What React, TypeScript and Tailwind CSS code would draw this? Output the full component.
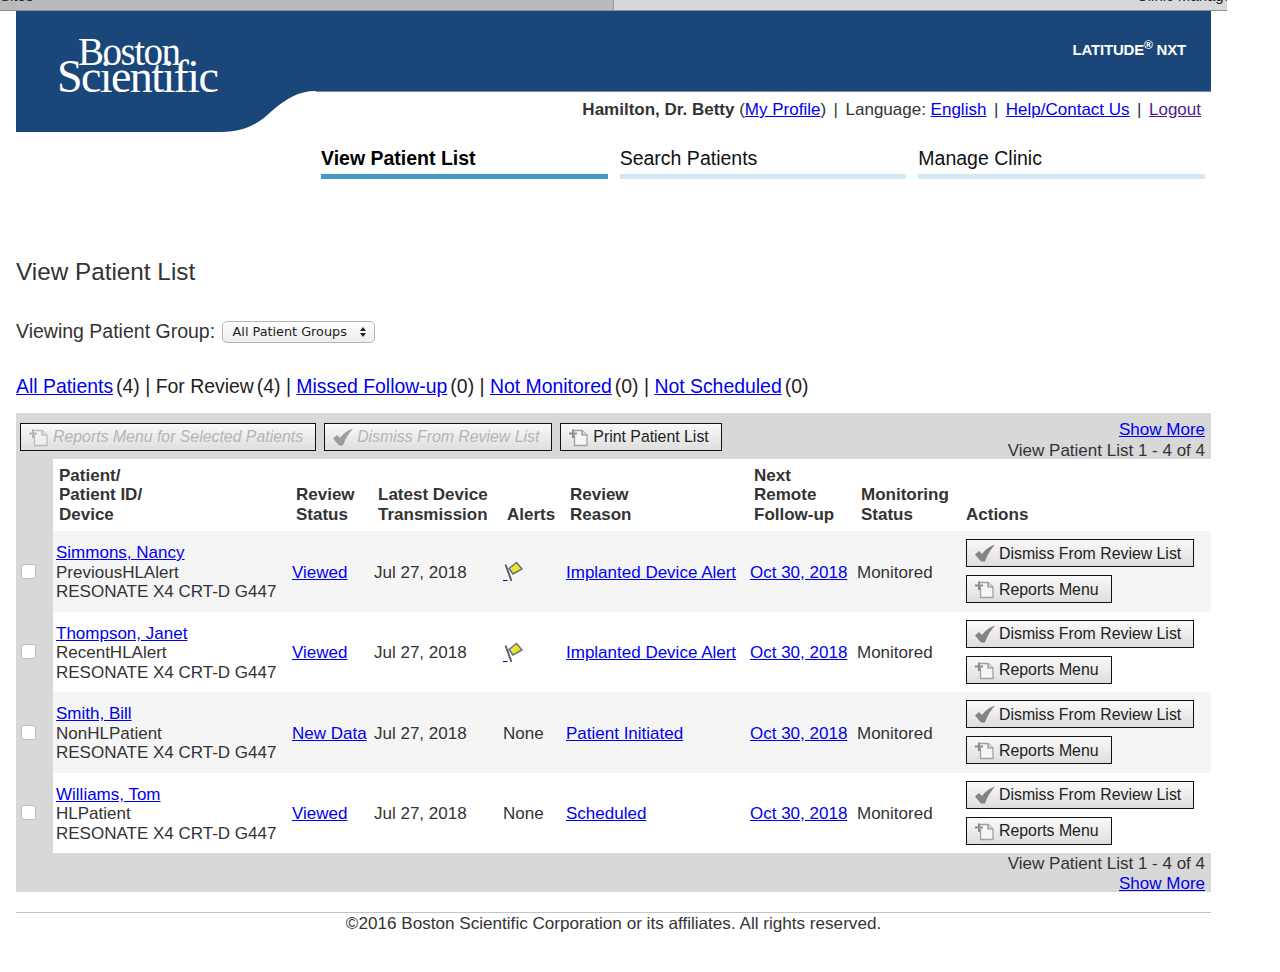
import type { ReactNode } from 'react'

type Patient = {
  name: string
  id: string
  review: string
  alert: boolean
  reason: string
}

const patients: Patient[] = [
  { name: 'Simmons, Nancy', id: 'PreviousHLAlert', review: 'Viewed', alert: true, reason: 'Implanted Device Alert' },
  { name: 'Thompson, Janet', id: 'RecentHLAlert', review: 'Viewed', alert: true, reason: 'Implanted Device Alert' },
  { name: 'Smith, Bill', id: 'NonHLPatient', review: 'New Data', alert: false, reason: 'Patient Initiated' },
  { name: 'Williams, Tom', id: 'HLPatient', review: 'Viewed', alert: false, reason: 'Scheduled' },
]

const A = ({ children }: { children: ReactNode }) => (
  <a href="#" className="text-[#0000ee] underline">{children}</a>
)

const Sep = () => <span className="mx-[7.5px]">|</span>

function DocIcon({ faded }: { faded?: boolean }) {
  return (
    <svg width="22" height="20" viewBox="0 0 22 20" className={faded ? 'opacity-60' : ''}>
      <path d="M4.5 3.5H14L19 8V18.5H6.5V8" fill="#f6f6f6" stroke="#a0a0a0" strokeWidth="1.3" />
      <path d="M1 6.5H9" stroke="#8d8d8d" strokeWidth="2" />
      <path d="M5 2.5V11" stroke="#8d8d8d" strokeWidth="2" />
      <path d="M14 3.5V8H19" fill="#dcdcdc" stroke="#8d8d8d" strokeWidth="1.2" />
    </svg>
  )
}

function CheckIcon({ faded }: { faded?: boolean }) {
  return (
    <svg width="22" height="20" viewBox="0 0 22 20" className={faded ? 'opacity-75' : ''}>
      <path d="M1 11.5L5 8L8 11C11 7 15 3.5 21 1.5C17 6 13 12 11 18.5H7Z" fill="#848484" />
    </svg>
  )
}

function FlagIcon() {
  return (
    <svg width="20" height="22" viewBox="0 0 20 22">
      <path d="M2.5 3.5L8.5 20" stroke="#555" strokeWidth="1.8" />
      <path d="M6 7.5L13.5 1.5L19 8L10 13Z" fill="#ebe622" stroke="#5f7390" strokeWidth="1.6" />
      <path d="M0 19.5H4.5" stroke="#0000ee" strokeWidth="1" />
    </svg>
  )
}

function ToolButton({ icon, label, faded }: { icon: ReactNode; label: string; faded?: boolean }) {
  return (
    <div className={`flex h-[28px] items-center gap-[3px] border border-[#111] bg-gradient-to-b from-[#fafafa] to-[#dedede] pl-[7px] pr-[12px] text-[15.85px] ${faded ? 'italic text-[#b5b5b5]' : 'text-[#222]'}`}>
      {icon}
      <span>{label}</span>
    </div>
  )
}

function Tab({ label, active }: { label: string; active?: boolean }) {
  return (
    <div className={`flex-1 border-b-[5px] pb-[3px] text-[19.5px] leading-[26px] ${active ? 'border-[#4499c9] font-bold text-black' : 'border-[#d0e9f5] text-[#111]'}`}>
      {label}
    </div>
  )
}

function Count({ n }: { n: number }) {
  return <span className="ml-[3px]">({n})</span>
}

export default function App() {
  return (
    <div className="relative h-[972px] w-[1280px] overflow-hidden bg-white font-['Liberation_Sans',Arial,sans-serif] text-[17px] text-[#333]">
      <div className="flex h-[11px] w-[1227px] overflow-hidden border-b border-[#8f8f8f] text-[15px] leading-[14px] text-[#222]">
        <div className="w-[613px] bg-[#bbbabb]">
          <div className="-mt-[11px]">Sites</div>
        </div>
        <div className="flex flex-1 justify-end border-l border-[#999] bg-[#d8d8da]">
          <div className="-mr-[10px] -mt-[11px]">Clinic Manager</div>
        </div>
      </div>

      <div className="ml-[16px] w-[1195px]">
        <header>
          <div className="flex h-[80px] items-start justify-between bg-[#1b4679] pl-[41px] pr-[25px] text-white">
            <div className="relative z-10 pt-[26px] font-['Liberation_Serif',serif]">
              <div className="ml-[21px] text-[39px] leading-[30px] tracking-[-1.5px]">Boston</div>
              <div className="-mt-[5px] text-[46px] leading-[30px] tracking-[-1.6px]">Scientific</div>
            </div>
            <div className="pt-[29px] text-[15px] font-bold leading-[20px] tracking-[-0.2px]">
              LATITUDE<sup className="text-[12px]">®</sup> NXT
            </div>
          </div>
          <div className="flex h-[41px]">
            <svg width="300" height="41" viewBox="0 0 300 41" className="block shrink-0">
              <path d="M0 0H300C282 0 270 8 257 19C245 30 232 41 205 41H0Z" fill="#1b4679" />
            </svg>
            <div className="flex-1 border-t border-[#6f8db3] pr-[10px] pt-[7px] text-right text-[17px] leading-[22px]">
              <b>Hamilton, Dr. Betty</b> (<A>My Profile</A>)<Sep />Language: <A>English</A><Sep /><A>Help/Contact Us</A><Sep /><a href="#" className="text-[#551a8b] underline">Logout</a>
            </div>
          </div>
        </header>

        <nav className="ml-[305px] mr-[6px] mt-[13px] flex gap-[12px]">
          <Tab label="View Patient List" active />
          <Tab label="Search Patients" />
          <Tab label="Manage Clinic" />
        </nav>

        <h1 className="mt-[78px] text-[24.3px] leading-[30px]">View Patient List</h1>

        <div className="mt-[33px] flex h-[24px] items-center gap-[6.5px] text-[19.5px]">
          <span>Viewing Patient Group:</span>
          <div className="flex h-[22px] w-[153px] items-center justify-between rounded-[5px] border border-[#b5b5b5] bg-gradient-to-b from-[#ffffff] to-[#ececec] pl-[10px] pr-[7px] font-['DejaVu_Sans',sans-serif] text-[12.8px] text-[#222]">
            <span>All Patient Groups</span>
            <svg width="8" height="12" viewBox="0 0 8 12"><path d="M4 1L7 5H1ZM4 11L1 7H7Z" fill="#222" /></svg>
          </div>
        </div>

        <div className="mt-[29px] h-[26px] text-[19.42px] leading-[26px] text-[#222]">
          <A>All Patients</A><Count n={4} /> | For Review<Count n={4} /> | <A>Missed Follow-up</A><Count n={0} /> | <A>Not Monitored</A><Count n={0} /> | <A>Not Scheduled</A><Count n={0} />
        </div>

        <section className="mt-[14px] bg-[#d8d8d8]">
          <div className="flex h-[46px] items-start justify-between pl-[4px] pr-[6px]">
            <div className="flex gap-[8px] pt-[10px]">
              <ToolButton faded icon={<DocIcon faded />} label="Reports Menu for Selected Patients" />
              <ToolButton faded icon={<CheckIcon faded />} label="Dismiss From Review List" />
              <ToolButton icon={<DocIcon />} label="Print Patient List" />
            </div>
            <div className="pt-[6px] text-right leading-[21px]">
              <div><A>Show More</A></div>
              <div>View Patient List 1 - 4 of 4</div>
            </div>
          </div>

          <table className="w-full table-fixed border-collapse text-left">
            <colgroup>
              <col className="w-[37px]" />
              <col className="w-[236px]" />
              <col className="w-[82px]" />
              <col className="w-[129px]" />
              <col className="w-[63px]" />
              <col className="w-[184px]" />
              <col className="w-[107px]" />
              <col className="w-[108px]" />
              <col />
            </colgroup>
            <thead>
              <tr className="h-[72px] align-bottom font-bold leading-[19.5px]">
                <th />
                {[
                  ['Patient/', 'Patient ID/', 'Device'],
                  ['Review', 'Status'],
                  ['Latest Device', 'Transmission'],
                  ['Alerts'],
                  ['Review', 'Reason'],
                  ['Next', 'Remote', 'Follow-up'],
                  ['Monitoring', 'Status'],
                  ['Actions'],
                ].map((lines, i) => (
                  <th key={lines.join()} className={`bg-white pb-[7px] pr-0 align-bottom ${i === 0 ? 'pl-[6px]' : i === 7 ? 'pl-[4px]' : 'pl-[7px]'}`}>
                    {lines.map((l) => <div key={l} className="whitespace-nowrap">{l}</div>)}
                  </th>
                ))}
              </tr>
            </thead>
            <tbody className="leading-[19.5px]">
              {patients.map((p, i) => (
                <tr key={p.name} className={i % 2 === 0 ? 'h-[80.5px] bg-[#f5f5f5]' : 'h-[80.5px] bg-white'}>
                  <td className="bg-[#d8d8d8] pl-[5px]">
                    <div className="h-[15px] w-[15px] rounded-[3px] border border-[#bdbdbd] bg-white" />
                  </td>
                  <td className="pl-[3px] pt-[2px] whitespace-nowrap">
                    <div><A>{p.name}</A></div>
                    <div>{p.id}</div>
                    <div>RESONATE X4 CRT-D G447</div>
                  </td>
                  <td className="pl-[3px] pt-[2px] whitespace-nowrap"><A>{p.review}</A></td>
                  <td className="pl-[3px] pt-[2px] whitespace-nowrap">Jul 27, 2018</td>
                  <td className="pl-[3px] pt-[2px]">{p.alert ? <FlagIcon /> : 'None'}</td>
                  <td className="pl-[3px] pt-[2px] whitespace-nowrap"><A>{p.reason}</A></td>
                  <td className="pl-[3px] pt-[2px] whitespace-nowrap"><A>Oct 30, 2018</A></td>
                  <td className="pl-[3px] pt-[2px] whitespace-nowrap">Monitored</td>
                  <td className="pl-[4px]">
                    <div className="flex flex-col items-start gap-[8px]">
                      <ToolButton icon={<CheckIcon />} label="Dismiss From Review List" />
                      <ToolButton icon={<DocIcon />} label="Reports Menu" />
                    </div>
                  </td>
                </tr>
              ))}
            </tbody>
          </table>

          <div className="h-[39px] pr-[6px] pt-[1px] text-right leading-[19.5px]">
            <div>View Patient List 1 - 4 of 4</div>
            <div><A>Show More</A></div>
          </div>
        </section>

        <footer className="mt-[20px] border-t border-[#c4c4c4] pt-[1px] text-center text-[17.13px] leading-[20px]">
          ©2016 Boston Scientific Corporation or its affiliates. All rights reserved.
        </footer>
      </div>
    </div>
  )
}
